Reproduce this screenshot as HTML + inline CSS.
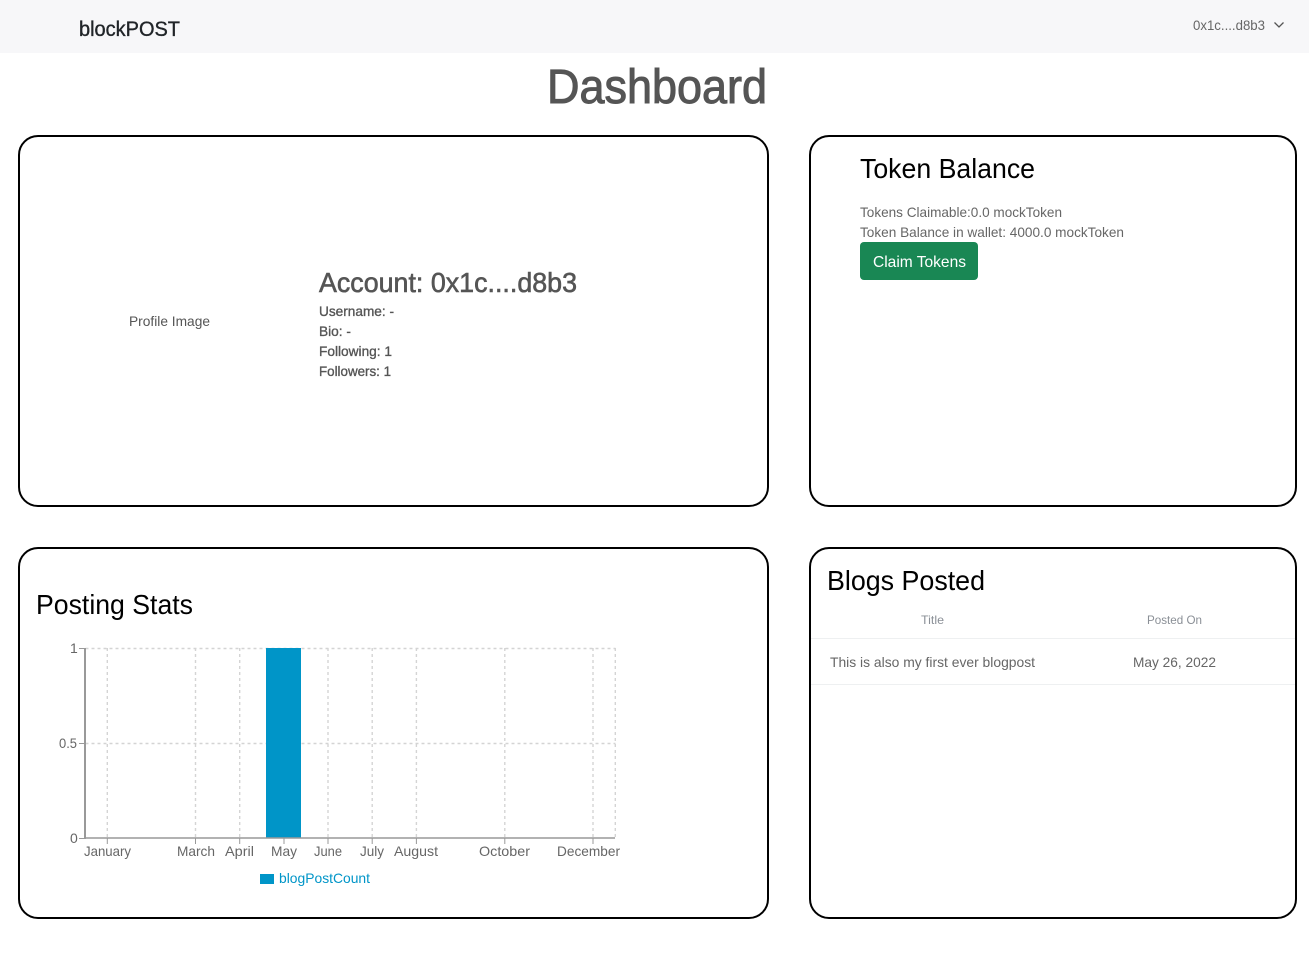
<!DOCTYPE html>
<html lang="en"><head><meta charset="utf-8"><title>Dashboard</title>
<style>
html,body{margin:0;padding:0;background:#fff;width:1309px;height:953px;overflow:hidden}
body{position:relative;font-family:"Liberation Sans",sans-serif}
.nav{position:absolute;left:0;top:0;width:1309px;height:53px;background:#f7f7f9}
.card{position:absolute;box-sizing:border-box;border:2px solid #000;border-radius:20px;background:#fff}
.btn{position:absolute;left:860px;top:242px;width:118px;height:38px;background:#198754;border-radius:4px}
.ln{position:absolute;left:811px;width:484px;height:1px;background:#eef0f1}
svg{position:absolute;left:0;top:0}
text{font-family:"Liberation Sans",sans-serif}
</style></head><body>
<div class="nav"></div>
<div class="card" style="left:18px;top:135px;width:751px;height:372px"></div>
<div class="card" style="left:809px;top:135px;width:488px;height:372px"></div>
<div class="card" style="left:18px;top:547px;width:751px;height:372px"></div>
<div class="card" style="left:809px;top:547px;width:488px;height:372px"></div>
<div class="btn"></div>
<div class="ln" style="top:638px"></div>
<div class="ln" style="top:684px"></div>
<svg width="1309" height="953" viewBox="0 0 1309 953" xmlns="http://www.w3.org/2000/svg">
<text x="79" y="36" font-size="21" fill="#212529" stroke="#212529" stroke-width=".35" textLength="101" lengthAdjust="spacingAndGlyphs">blockPOST</text>
<text x="1193" y="30" font-size="14" fill="#666" textLength="72" lengthAdjust="spacingAndGlyphs">0x1c....d8b3</text>
<path d="M1274.500 22.500l4.500 4.500 4.500-4.500" fill="none" stroke="#555" stroke-width="1.300"/>
<text x="547" y="103" font-size="48" fill="#555" stroke="#555" stroke-width="1" textLength="220" lengthAdjust="spacingAndGlyphs">Dashboard</text>
<text x="129" y="326" font-size="14" fill="#555" textLength="81" lengthAdjust="spacingAndGlyphs">Profile Image</text>
<text x="319" y="292" font-size="28" fill="#555" stroke="#555" stroke-width=".6" textLength="258" lengthAdjust="spacingAndGlyphs">Account: 0x1c....d8b3</text>
<g font-size="14" fill="#555" stroke="#555" stroke-width=".35">
<text x="319" y="316" textLength="75" lengthAdjust="spacingAndGlyphs">Username: -</text>
<text x="319" y="336" textLength="32" lengthAdjust="spacingAndGlyphs">Bio: -</text>
<text x="319" y="356" textLength="73" lengthAdjust="spacingAndGlyphs">Following: 1</text>
<text x="319" y="376" textLength="72" lengthAdjust="spacingAndGlyphs">Followers: 1</text>
</g>
<text x="860" y="178" font-size="28" fill="#000" textLength="175" lengthAdjust="spacingAndGlyphs">Token Balance</text>
<text x="860" y="217" font-size="14" fill="#666" textLength="202" lengthAdjust="spacingAndGlyphs">Tokens Claimable:0.0 mockToken</text>
<text x="860" y="237" font-size="14" fill="#666" textLength="264" lengthAdjust="spacingAndGlyphs">Token Balance in wallet: 4000.0 mockToken</text>
<text x="873" y="267" font-size="16" fill="#fff" textLength="93" lengthAdjust="spacingAndGlyphs">Claim Tokens</text>
<text x="36" y="614" font-size="28" fill="#000" textLength="157" lengthAdjust="spacingAndGlyphs">Posting Stats</text>
<text x="827" y="590" font-size="28" fill="#000" textLength="158" lengthAdjust="spacingAndGlyphs">Blogs Posted</text>
<text x="921" y="624" font-size="12" fill="#8a8f96" textLength="23" lengthAdjust="spacingAndGlyphs">Title</text>
<text x="1147" y="624" font-size="12" fill="#8a8f96" textLength="55" lengthAdjust="spacingAndGlyphs">Posted On</text>
<text x="830" y="667" font-size="14" fill="#666" textLength="205" lengthAdjust="spacingAndGlyphs">This is also my first ever blogpost</text>
<text x="1133" y="667" font-size="14" fill="#666" textLength="83" lengthAdjust="spacingAndGlyphs">May 26, 2022</text>
<g stroke="#d4d4d4" stroke-width="1.400" stroke-dasharray="3 3" fill="none">
<path d="M85.500 648.500H615.500M85.500 743.500H615.500"/>
<path d="M107.300 648V838M195.500 648V838M239.700 648V838M284 648V838M328 648V838M372.200 648V838M416.400 648V838M504.800 648V838M593 648V838M615.300 648V838"/>
</g>
<rect x="266" y="648" width="35" height="190" fill="#0095c8"/>
<g stroke="#999" stroke-width="1" fill="none">
<path d="M85 648V839" stroke-width="2"/>
<path d="M85 838H615" stroke-width="1.600"/>
<path d="M79 648.500H85M79 743.500H85M79 838.500H85"/>
<path d="M107.300 838V844M195.500 838V844M239.700 838V844M284 838V844M328 838V844M372.200 838V844M416.400 838V844M504.800 838V844M593 838V844"/>
</g>
<g font-size="14" fill="#666">
<text x="70" y="653">1</text>
<text x="59" y="748" textLength="18" lengthAdjust="spacingAndGlyphs">0.5</text>
<text x="70" y="843">0</text>
<text x="84" y="856" textLength="47" lengthAdjust="spacingAndGlyphs">January</text>
<text x="177" y="856" textLength="38" lengthAdjust="spacingAndGlyphs">March</text>
<text x="225" y="856" textLength="29" lengthAdjust="spacingAndGlyphs">April</text>
<text x="271" y="856" textLength="26" lengthAdjust="spacingAndGlyphs">May</text>
<text x="314" y="856" textLength="28" lengthAdjust="spacingAndGlyphs">June</text>
<text x="360" y="856" textLength="24" lengthAdjust="spacingAndGlyphs">July</text>
<text x="394" y="856" textLength="44" lengthAdjust="spacingAndGlyphs">August</text>
<text x="479" y="856" textLength="51" lengthAdjust="spacingAndGlyphs">October</text>
<text x="557" y="856" textLength="63" lengthAdjust="spacingAndGlyphs">December</text>
</g>
<rect x="260" y="874" width="14" height="10" fill="#0095c8"/>
<text x="279" y="883" font-size="14" fill="#0095c8" textLength="91" lengthAdjust="spacingAndGlyphs">blogPostCount</text>
</svg>
</body></html>
